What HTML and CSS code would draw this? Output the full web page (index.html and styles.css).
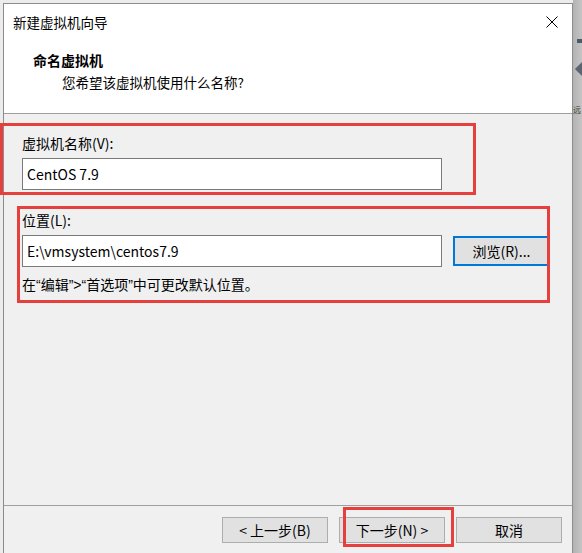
FILE: index.html
```html
<!DOCTYPE html>
<html lang="zh-CN">
<head>
  <meta charset="UTF-8">
  <meta name="viewport" content="width=device-width">
  <title>新建虚拟机向导</title>
  <link rel="stylesheet" href="styles.css">
</head>
<body>

<div class="wizard">
  <div class="titlebar">
    <span class="caption">新建虚拟机向导</span>
    <svg class="close" width="12" height="12" viewBox="0 0 12 12">
      <path d="M0.5 0.5 L11.5 11.5 M11.5 0.5 L0.5 11.5" stroke="#000" stroke-width="1" fill="none"/>
    </svg>
  </div>

  <div class="header">
    <h1>命名虚拟机</h1>
    <p>您希望该虚拟机使用什么名称?</p>
  </div>

  <div class="content">
    <label class="lbl">虚拟机名称(V):</label>
    <div class="row">
      <input class="textbox" type="text" value="CentOS 7.9">
    </div>
    <label class="lbl lbl-loc">位置(L):</label>
    <div class="row">
      <input class="textbox" type="text" value="E:\vmsystem\centos7.9">
      <button class="btn browse">浏览(R)...</button>
    </div>
    <p class="hint">在<span class="latin">“</span>编辑<span class="latin">”&gt;“</span>首选项<span class="latin">”</span>中可更改默认位置。</p>
  </div>

  <div class="footer">
    <button class="btn">&lt; 上一步(B)</button>
    <button class="btn">下一步(N) &gt;</button>
    <button class="btn">取消</button>
  </div>
</div>

<!-- background behind the dialog, right edge -->
<div class="bg-bit bg-square"></div>
<div class="bg-bit bg-diamond"></div>
<div class="bg-bit bg-char">远</div>

<!-- red annotation frames -->
<div class="mark mark-name"></div>
<div class="mark mark-loc"></div>
<div class="mark mark-next"></div>

</body>
</html>
```

FILE: styles.css
```css
html, body {
    margin: 0;
    height: 100%;
    overflow: hidden;
}
body {
    background: linear-gradient(to right, #ececec 0, #ececec 573px, #b3b3b3 573px, #c4c4c4 100%);
    font-family: "Noto Sans CJK SC", "Microsoft YaHei", sans-serif;
    font-size: 14px;
    color: #000;
    position: relative;
}
.wizard {
    margin: 3px 0 0 3px;
    width: 570px;
    box-sizing: border-box;
    border: 1px solid #8c8c8c;
    border-bottom: none;
    background: #f0f0f0;
}
.titlebar {
    height: 36px;
    display: flex;
    align-items: center;
    justify-content: space-between;
    padding: 0 14px 0 9px;
    background: #fff;
}
.caption {
    font-size: 13.5px;
    line-height: 20px;
}
.close {
    display: block;
}
.header {
    height: 63px;
    background: #fff;
    border-bottom: 1px solid #a0a0a0;
    padding-top: 10px;
}
.header h1 {
    margin: 0;
    padding-left: 29px;
    font-size: 14px;
    font-weight: 700;
    line-height: 20px;
}
.header p {
    margin: 2px 0 0;
    padding-left: 58px;
    font-size: 13.5px;
    line-height: 20px;
}
.content {
    height: 391px;
    box-sizing: border-box;
    padding: 19px 0 0 18px;
}
.lbl {
    display: block;
    line-height: 20px;
}
.lbl-loc {
    margin-top: 20px;
}
.row {
    display: flex;
    align-items: center;
    gap: 11px;
    margin-top: 5px;
}
.textbox {
    width: 420px;
    height: 32px;
    box-sizing: border-box;
    border: 1px solid #7a7a7a;
    background: #fff;
    padding: 0 4px;
    margin: 0;
    font: inherit;
    font-size: 14px;
    color: #000;
    outline: none;
}
.btn {
    width: 106px;
    height: 26px;
    box-sizing: border-box;
    border: 1px solid #adadad;
    background: #e1e1e1;
    font: inherit;
    font-size: 14px;
    color: #000;
    padding: 0;
    margin: 0;
}
.browse {
    width: 97px;
    height: 30px;
    border: 2px solid #0078d7;
}
.hint {
    margin: 7px 0 0;
    line-height: 20px;
}
.latin {
    font-family: "Liberation Sans", Arial, sans-serif;
}
.footer {
    border-top: 1px solid #a0a0a0;
    display: flex;
    justify-content: flex-end;
    gap: 11px;
    padding: 11px 10px 0 0;
    height: 60px;
}

.bg-bit {
    position: absolute;
}
.bg-square {
    left: 577px;
    top: 39px;
    width: 6px;
    height: 4px;
    background: #4e5a66;
}
.bg-diamond {
    left: 577px;
    top: 64px;
    width: 10px;
    height: 10px;
    background: #5b6672;
    transform: rotate(45deg);
}
.bg-char {
    left: 573px;
    top: 104px;
    font-size: 8px;
    line-height: 12px;
    color: #3a3a2a;
}

.mark {
    position: absolute;
    box-sizing: border-box;
    border: 3px solid #e5403e;
}
.mark-name {
    left: 0;
    top: 123px;
    width: 476px;
    height: 72px;
}
.mark-loc {
    left: 17px;
    top: 206px;
    width: 533px;
    height: 97px;
}
.mark-next {
    left: 343px;
    top: 507px;
    width: 111px;
    height: 40px;
}
```
